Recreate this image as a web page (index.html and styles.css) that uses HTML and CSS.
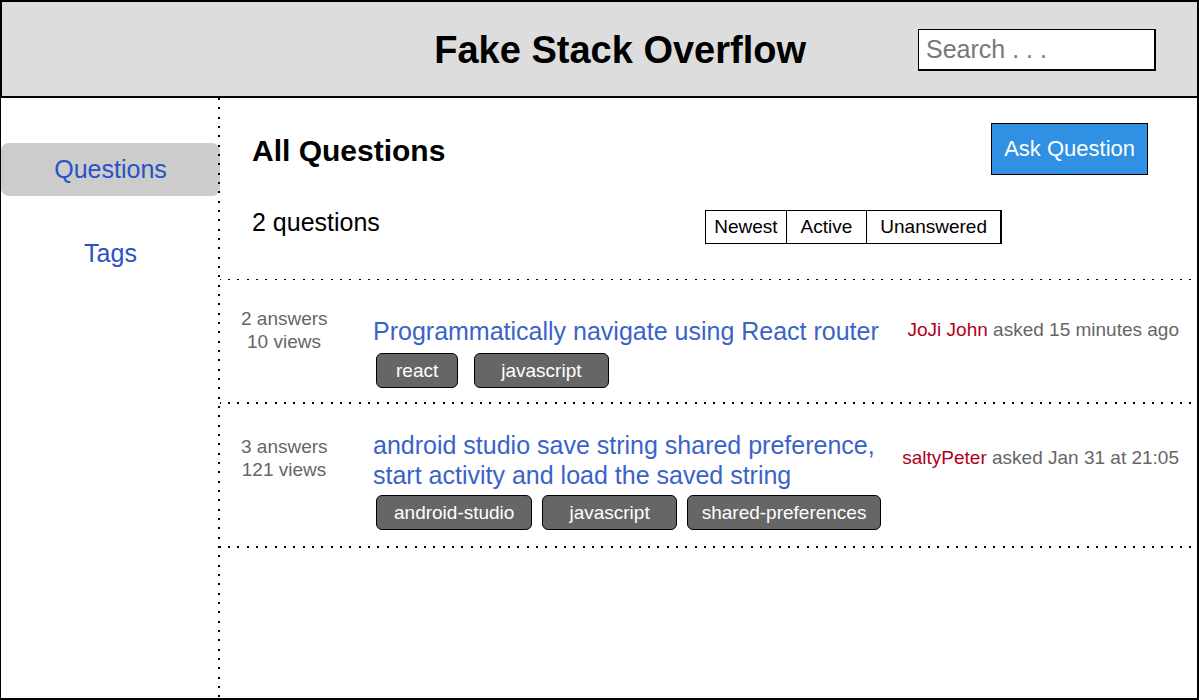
FILE: index.html
```html
<!DOCTYPE html>
<html lang="en">
<head>
<meta charset="utf-8">
<meta name="viewport" content="width=device-width, initial-scale=1">
<title>Fake Stack Overflow</title>
<link rel="stylesheet" href="styles.css">
</head>
<body>
<div class="page">
  <header class="header">
    <h1 class="header-title">Fake Stack Overflow</h1>
    <input class="search" type="search" placeholder="Search . . ." aria-label="Search">
  </header>
  <div class="body">
    <nav class="sidebar">
      <a class="nav-link nav-link-active" href="#questions">Questions</a>
      <a class="nav-link" href="#tags">Tags</a>
    </nav>
    <main class="main">
      <section class="toolbar">
        <div class="toolbar-row">
          <h2 class="heading">All Questions</h2>
          <button class="ask" type="button">Ask Question</button>
        </div>
        <div class="toolbar-row toolbar-row-filters">
          <p class="count">2 questions</p>
          <div class="filters">
            <button class="filter" type="button">Newest</button>
            <button class="filter filter-medium" type="button">Active</button>
            <button class="filter filter-wide" type="button">Unanswered</button>
          </div>
        </div>
      </section>
      <article class="question question-short">
        <div class="stats"><div>2 answers</div><div>10 views</div></div>
        <div class="summary">
          <a class="question-title" href="#q1">Programmatically navigate using React router</a>
          <div class="tags tags-loose">
            <button class="tag tag-medium" type="button">react</button>
            <button class="tag tag-wide" type="button">javascript</button>
          </div>
        </div>
        <div class="asked"><span class="author">JoJi John</span> asked 15 minutes ago</div>
      </article>
      <article class="question question-tall">
        <div class="stats"><div>3 answers</div><div>121 views</div></div>
        <div class="summary">
          <a class="question-title" href="#q2">android studio save string shared preference, start activity and load the saved string</a>
          <div class="tags">
            <button class="tag" type="button">android-studio</button>
            <button class="tag tag-wide" type="button">javascript</button>
            <button class="tag tag-narrow" type="button">shared-preferences</button>
          </div>
        </div>
        <div class="asked"><span class="author">saltyPeter</span> asked Jan 31 at 21:05</div>
      </article>
    </main>
  </div>
</div>
</body>
</html>
```
FILE: styles.css
```css
* {
  box-sizing: border-box;
}

body {
  margin: 0;
  background: #fff;
  color: #000;
  font-family: "Liberation Sans", Arial, sans-serif;
  font-size: 19px;
}

button,
input {
  font-family: inherit;
  margin: 0;
}

h1,
h2,
p {
  margin: 0;
}

.page {
  display: flex;
  flex-direction: column;
  min-height: 100vh;
  border: 2px solid #000;
  border-left-width: 1px;
}

.header {
  display: flex;
  align-items: center;
  justify-content: flex-end;
  gap: 112px;
  min-height: 96px;
  padding: 2px 41px 0 24px;
  background: #ddd;
  border-bottom: 2px solid #000;
  border-left: 1px solid #000;
}

.header-title {
  font-size: 38px;
  line-height: 44px;
}

.search {
  width: 238px;
  height: 42px;
  padding: 0 7px;
  appearance: none;
  background: #fff;
  border: 1px solid #000;
  border-right-width: 2px;
  border-bottom-width: 2px;
  border-radius: 0;
  font-size: 25px;
}

.search::placeholder {
  color: #777;
  opacity: 1;
}

.body {
  display: flex;
  flex: 1;
}

/* Sidebar, with a dotted divider drawn over its right edge */
.sidebar {
  position: relative;
  display: flex;
  flex-direction: column;
  flex: 0 0 219px;
  gap: 31px;
  padding-top: 45px;
}

.sidebar::after {
  content: "";
  position: absolute;
  top: 0;
  right: 0;
  bottom: 0;
  width: 2px;
  background: linear-gradient(#000 2px, transparent 2px 9px, #000 9px 11px, transparent 11px 19px, #000 19px 21px, transparent 21px) 0 0 / 2px 28px;
}

.nav-link {
  border-radius: 8px;
  color: #2852c5;
  font-size: 25px;
  line-height: 53px;
  text-align: center;
  text-decoration: none;
}

.nav-link-active {
  background: #ccc;
}

.main {
  flex: 1;
  min-width: 0;
}

.toolbar {
  padding: 25px 49px 35px 32px;
}

.toolbar-row {
  display: flex;
  align-items: center;
  justify-content: space-between;
}

.toolbar-row-filters {
  align-items: flex-start;
  margin-top: 35px;
  padding-right: 146px;
}

.heading {
  padding-top: 4px;
  font-size: 30px;
  line-height: 34px;
}

.ask {
  height: 52px;
  padding: 0 12px;
  background: #3090e3;
  border: 1px solid #000;
  color: #fff;
  font-size: 22px;
}

.count {
  font-size: 25px;
  line-height: 24px;
}

.filters {
  display: flex;
  border: 1px solid #000;
  border-right-width: 2px;
}

.filter {
  height: 32px;
  padding: 0 8px;
  background: #fff;
  border: 0;
  font-size: 19px;
}

.filter + .filter {
  border-left: 1px solid #000;
}

.filter-medium {
  padding: 0 14px;
}

.filter-wide {
  padding: 0 13px;
}

/* Question rows, each one opened by a dotted rule */
.question {
  display: grid;
  grid-template-columns: 110px 1fr auto;
  column-gap: 17px;
  padding: 28px 18px 14px 21px;
  background: linear-gradient(to right, #000 2px, transparent 2px 9px, #000 9px 11px, transparent 11px 19px, #000 19px 21px, transparent 21px) 8px 0 / 28px 1px repeat-x;
}

.question-tall {
  padding: 28px 18px 18px 21px;
  background-size: 28px 2px;
  background-image: linear-gradient(to right, #000 2px, transparent 2px 9px, #000 9px 11px, transparent 11px 19px, #000 19px 21px, transparent 21px), linear-gradient(to right, #000 2px, transparent 2px 9px, #000 9px 11px, transparent 11px 19px, #000 19px 21px, transparent 21px);
  background-position: 8px 0, 8px 100%;
}

.question-short .summary {
  padding-top: 9px;
}

.question-tall .stats,
.question-tall .asked {
  padding-top: 5px;
}

.stats {
  width: 86px;
  color: #666;
  line-height: 23px;
  text-align: center;
  white-space: nowrap;
}

.summary {
  padding-left: 5px;
}

.question-title {
  display: block;
  color: #3a63c8;
  font-size: 25px;
  line-height: 30px;
  text-decoration: none;
}

.tags {
  display: flex;
  flex-wrap: wrap;
  gap: 10px;
  padding: 5px 0 0 3px;
}

.tags-loose {
  column-gap: 16px;
  padding-top: 7px;
}

.tag {
  height: 35px;
  padding: 0 17px;
  background: #666;
  border: 1px solid #000;
  border-radius: 6px;
  color: #fff;
  font-size: 19px;
}

.tag-narrow {
  padding: 0 14px;
}

.tag-medium {
  padding: 0 19px;
}

.tag-wide {
  padding: 0 26px;
}

.asked {
  color: #666;
  line-height: 46px;
  white-space: nowrap;
}

.author {
  color: #b00020;
}
```
